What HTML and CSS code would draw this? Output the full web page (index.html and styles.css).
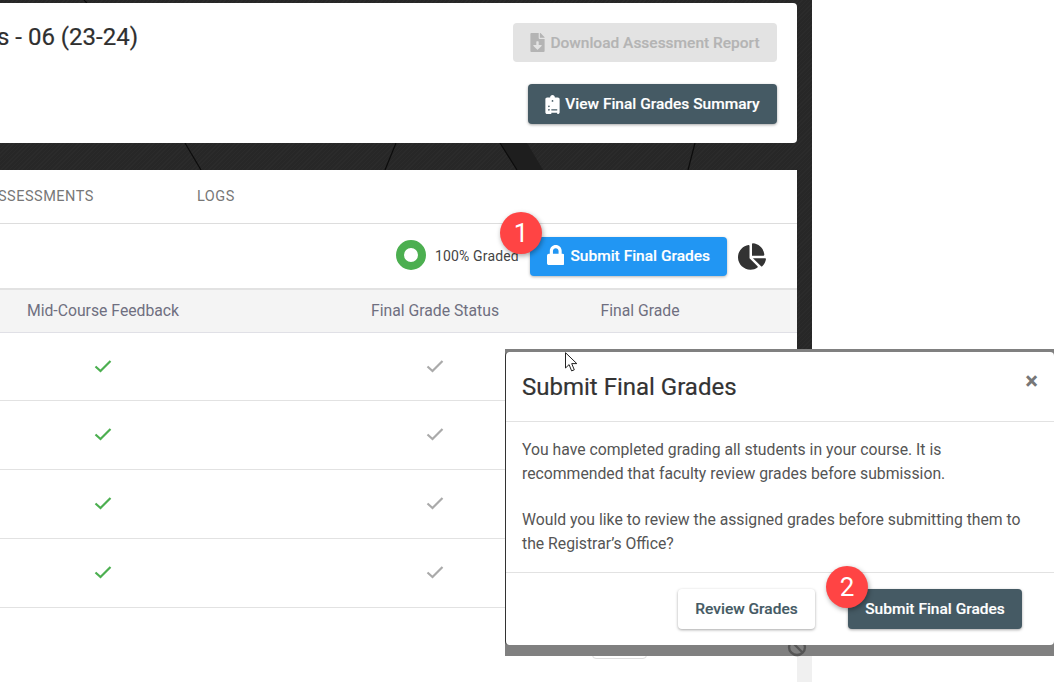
FILE: index.html
```html
<!DOCTYPE html>
<html lang="en">
<head>
<meta charset="utf-8">
<title>Submit Final Grades</title>
<link rel="stylesheet" href="styles.css">
</head>
<body>
<div class="page">
  <svg class="backdrop" width="812" height="682" viewBox="0 0 812 682" aria-hidden="true">
    <path class="wedge" d="M500 143L527 143L543 170L517 170Z"/>
    <path class="crease" d="M185 143L201 170M396 143L385 170M500 143L517 170M695 143L688 170M84 0L87 3"/>
  </svg>
  <section class="card head-card">
    <h1 class="course-title">s - 06 (23-24)</h1>
    <div class="head-actions">
      <button class="btn btn-disabled">
        <svg class="btn-icon" viewBox="0 0 384 512"><path d="M224 136V0H24C10.7 0 0 10.7 0 24v464c0 13.3 10.7 24 24 24h336c13.3 0 24-10.7 24-24V160H248c-13.2 0-24-10.8-24-24zm76.45 211.36l-96.42 95.7c-6.65 6.61-17.39 6.61-24.04 0l-96.42-95.7C73.42 337.29 80.54 320 94.82 320H160v-80c0-8.84 7.16-16 16-16h32c8.84 0 16 7.16 16 16v80h65.18c14.28 0 21.4 17.29 11.27 27.36zM377 105L279.1 7c-4.5-4.5-10.6-7-17-7H256v128h128v-6.1c0-6.3-2.5-12.4-7-16.9z"/></svg>
        Download Assessment Report
      </button>
      <button class="btn btn-slate btn-summary">
        <svg class="btn-icon" viewBox="0 0 384 512"><path d="M336 64h-80c0-35.3-28.7-64-64-64s-64 28.7-64 64H48C21.5 64 0 85.5 0 112v352c0 26.5 21.5 48 48 48h288c26.5 0 48-21.5 48-48V112c0-26.5-21.5-48-48-48zM96 424c-13.3 0-24-10.7-24-24s10.7-24 24-24 24 10.7 24 24-10.7 24-24 24zm0-96c-13.3 0-24-10.7-24-24s10.7-24 24-24 24 10.7 24 24-10.7 24-24 24zm96-192c13.3 0 24 10.7 24 24s-10.7 24-24 24-24-10.7-24-24 10.7-24 24-24zm128 368c0 4.4-3.6 8-8 8H168c-4.4 0-8-3.6-8-8v-16c0-4.4 3.6-8 8-8h144c4.4 0 8 3.6 8 8v16zm0-96c0 4.4-3.6 8-8 8H168c-4.4 0-8-3.6-8-8v-16c0-4.4 3.6-8 8-8h144c4.4 0 8 3.6 8 8v16z"/></svg>
        View Final Grades Summary
      </button>
    </div>
  </section>

  <section class="card grades-card">
    <nav class="tabs">
      <span class="tab tab-assess">SSESSMENTS</span>
      <span class="tab">LOGS</span>
    </nav>
    <div class="toolbar">
      <span class="donut"></span>
      <span class="graded">100% Graded</span>
      <span class="submit-wrap">
        <button class="btn btn-blue">
          <svg class="btn-icon lock" viewBox="0 0 448 512"><path d="M400 224h-24v-72C376 68.2 307.8 0 224 0S72 68.2 72 152v72H48c-26.5 0-48 21.5-48 48v192c0 26.5 21.5 48 48 48h352c26.5 0 48-21.5 48-48V272c0-26.5-21.5-48-48-48zm-104 0H152v-72c0-39.7 32.3-72 72-72s72 32.3 72 72v72z"/></svg>
          Submit Final Grades
        </button>
        <span class="badge badge-one">1</span>
      </span>
      <svg class="pie" viewBox="0 0 544 512"><path d="M527.79 288H290.5l158.03 158.03c6.04 6.04 15.98 6.53 22.19.68 38.7-36.46 65.32-85.61 73.13-140.86 1.34-9.46-6.51-17.85-16.06-17.85zm-15.83-64.8C503.72 103.74 408.26 8.28 288.8.04 279.68-.59 272 7.1 272 16.24V240h223.77c9.14 0 16.82-7.68 16.19-16.8zM224 288V50.71c0-9.55-8.39-17.4-17.84-16.06C86.99 51.49-4.1 155.6.14 280.37 4.5 408.51 114.83 513.59 243.03 511.98c50.4-.63 96.97-16.87 135.26-44.03 7.9-5.6 8.42-17.23 1.57-24.08L224 288z"/></svg>
    </div>
    <div class="grid grid-head">
      <span>Mid-Course Feedback</span><span></span><span>Final Grade Status</span><span>Final Grade</span>
    </div>
    <div class="grid grid-row">
      <svg class="check ok" viewBox="0 0 18 14"><path d="M1.5 7.5L6.5 12L16.5 2"/></svg><span></span><svg class="check muted" viewBox="0 0 18 14"><path d="M1.5 7.5L6.5 12L16.5 2"/></svg>
    </div>
    <div class="grid grid-row">
      <svg class="check ok" viewBox="0 0 18 14"><path d="M1.5 7.5L6.5 12L16.5 2"/></svg><span></span><svg class="check muted" viewBox="0 0 18 14"><path d="M1.5 7.5L6.5 12L16.5 2"/></svg>
    </div>
    <div class="grid grid-row">
      <svg class="check ok" viewBox="0 0 18 14"><path d="M1.5 7.5L6.5 12L16.5 2"/></svg><span></span><svg class="check muted" viewBox="0 0 18 14"><path d="M1.5 7.5L6.5 12L16.5 2"/></svg>
    </div>
    <div class="grid grid-row">
      <svg class="check ok" viewBox="0 0 18 14"><path d="M1.5 7.5L6.5 12L16.5 2"/></svg><span></span><svg class="check muted" viewBox="0 0 18 14"><path d="M1.5 7.5L6.5 12L16.5 2"/></svg>
    </div>
    <span class="ghost-btn"></span>
  </section>
</div>

<div class="overlay">
  <svg class="ban" viewBox="0 0 20 20"><circle cx="10" cy="10" r="8"/><path d="M4.5 4.5L15.5 15.5"/></svg>
  <div class="modal">
    <header class="modal-head">
      <h2>Submit Final Grades</h2>
      <span class="close">&times;</span>
    </header>
    <div class="modal-body">
      <p>You have completed grading all students in your course. It is recommended that faculty review grades before submission.</p>
      <p>Would you like to review the assigned grades before submitting them to the Registrar’s Office?</p>
    </div>
    <footer class="modal-foot">
      <button class="btn btn-white">Review Grades</button>
      <span class="submit-wrap">
        <button class="btn btn-slate btn-confirm">Submit Final Grades</button>
        <span class="badge badge-two">2</span>
      </span>
    </footer>
  </div>
  <svg class="cursor" viewBox="0 0 13 20"><path d="M.5.7V16l3.6-3.4 2.5 6.3 2.7-1.1-2.6-6.2h5.1z"/></svg>
</div>
</body>
</html>
```

FILE: styles.css
```css
* { box-sizing: border-box; }

html, body {
  margin: 0;
  height: 100%;
}

body {
  position: relative;
  width: 1054px;
  height: 682px;
  overflow: hidden;
  background: #fff;
  font-family: Roboto, "Liberation Sans", sans-serif;
  color: #333;
}

.page {
  position: relative;
  display: flex;
  flex-direction: column;
  gap: 27px;
  width: 812px;
  height: 682px;
  padding: 3px 15px 0 0;
  overflow: hidden;
  background:
    repeating-linear-gradient(135deg, rgba(255,255,255,.018) 0 1px, transparent 1px 3px),
    linear-gradient(#272727 0 650px, #f0f0f0 650px);
}

.backdrop {
  position: absolute;
  left: 0;
  top: 0;
}
.wedge { fill: #1e1e1e; }
.crease { fill: none; stroke: #0c0c0c; stroke-width: 1.2; }

.card {
  position: relative;
  background: #fff;
}

.head-card {
  display: flex;
  justify-content: space-between;
  height: 140px;
  padding: 20px 20px 0 0;
  border-radius: 0 4px 4px 0;
}

.course-title {
  margin: 0 0 0 -3px;
  font-size: 24px;
  line-height: 28px;
  font-weight: 400;
  color: #2f2f2f;
  -webkit-text-stroke: .2px #2f2f2f;
}

.head-actions {
  display: flex;
  flex-direction: column;
  align-items: flex-end;
  gap: 22px;
}

.btn {
  display: inline-flex;
  align-items: center;
  justify-content: center;
  gap: 5px;
  height: 39px;
  padding: 0;
  border: 0;
  border-radius: 4px;
  font-family: inherit;
  font-size: 15.5px;
  font-weight: 500;
  -webkit-text-stroke: .15px currentColor;
  white-space: nowrap;
}

.btn-icon {
  width: 15px;
  height: 19px;
  fill: currentColor;
}

.btn-disabled {
  width: 264px;
  background: #e3e3e3;
  color: #b4b4b4;
}

.btn-slate {
  background: #455a64;
  color: #fff;
  box-shadow: 0 1px 3px rgba(0,0,0,.35);
}

.btn-summary {
  width: 249px;
  height: 40px;
}

.grades-card {
  flex: 1;
}

.tabs {
  display: flex;
  height: 54px;
  padding-bottom: 1px;
  align-items: center;
  border-bottom: 1px solid #ddd;
  font-size: 14.5px;
  letter-spacing: .5px;
  color: #777;
}
.tab-assess { margin-left: -2px; width: 199px; }

.toolbar {
  display: flex;
  align-items: center;
  height: 66px;
  padding-left: 396px;
  border-bottom: 2px solid #e2e2e2;
}

.donut {
  width: 30px;
  height: 30px;
  margin-top: -3px;
  border: 8px solid #4caf50;
  border-radius: 50%;
}

.graded {
  width: 95px;
  margin-left: 9px;
  font-size: 14px;
  letter-spacing: .15px;
  color: #444;
}

.submit-wrap {
  position: relative;
  display: inline-flex;
}

.btn-blue {
  width: 197px;
  gap: 6px;
  background: #2196f3;
  color: #fff;
  box-shadow: 0 1px 3px rgba(0,0,0,.3);
}
.lock { width: 17.5px; height: 20px; margin-top: -3px; }

.badge {
  position: absolute;
  display: flex;
  align-items: center;
  justify-content: center;
  width: 42px;
  height: 42px;
  border-radius: 50%;
  background: #ff4444;
  color: #fff;
  font-size: 26px;
  box-shadow: 1px 2px 5px rgba(0,0,0,.35);
}
.badge-one { left: -30px; top: -25px; }
.badge-two { left: -22px; top: -23px; }

.pie {
  width: 28px;
  height: 27px;
  margin-left: 11px;
  fill: #333;
}

.grid {
  display: grid;
  grid-template-columns: 206px 126px 206px 204px;
  align-items: center;
  justify-items: center;
}

.grid-head {
  height: 43px;
  padding-bottom: 1px;
  background: #f4f4f4;
  border-bottom: 1px solid #e0e0e6;
  font-size: 15.75px;
  color: #6f6f80;
}

.grid-row {
  height: 69px;
  padding-bottom: 2px;
  border-bottom: 1px solid #e2e2e2;
}
.grid-head + .grid-row { height: 68px; }

.check {
  width: 18px;
  height: 14px;
  fill: none;
  stroke-width: 2.2;
}
.check.ok { stroke: #4caf50; }
.check.muted { stroke: #aaa; }

.ghost-btn {
  position: absolute;
  left: 592px;
  top: 470px;
  width: 55px;
  height: 19px;
  border: 1px solid #ddd;
  border-radius: 4px;
}

.overlay {
  position: absolute;
  left: 505px;
  top: 349px;
  width: 549px;
  height: 307px;
  padding-top: 3px;
  background: #808080;
}

.ban {
  position: absolute;
  left: 282px;
  top: 288px;
  width: 20px;
  height: 20px;
  fill: none;
  stroke: #555;
  stroke-width: 2.4;
}

.modal {
  position: relative;
  display: flex;
  flex-direction: column;
  height: 293px;
  background: #fff;
  border-radius: 4px;
  border-left: 1px solid #333;
}

.modal-head {
  display: flex;
  justify-content: space-between;
  height: 70px;
  padding: 18px 16px 0 16px;
  border-bottom: 1px solid #e2e2e2;
}
.modal-head h2 {
  margin: 0;
  font-size: 24px;
  line-height: 34px;
  font-weight: 400;
  color: #333;
  -webkit-text-stroke: .2px #333;
}
.close {
  font-size: 24px;
  line-height: 22px;
  font-weight: 700;
  color: #777;
}

.modal-body {
  height: 150px;
  padding: 16px 16px 0;
  font-size: 15.75px;
  line-height: 23.5px;
  color: #555;
}
.modal-body p { margin: 0 0 23px; }

.modal-foot {
  display: flex;
  justify-content: flex-end;
  align-items: flex-start;
  gap: 33px;
  flex: 1;
  padding: 16px 32px 0 0;
  border-top: 1px solid #e2e2e2;
}

.btn-white {
  width: 137px;
  height: 40px;
  background: #fff;
  color: #455a64;
  box-shadow: 0 1px 3px rgba(0,0,0,.35);
}

.btn-confirm {
  width: 174px;
  height: 40px;
}

.cursor {
  position: absolute;
  left: 60px;
  top: 3px;
  width: 13px;
  height: 20px;
  fill: #fff;
  stroke: #222;
  stroke-width: 1;
}
```
